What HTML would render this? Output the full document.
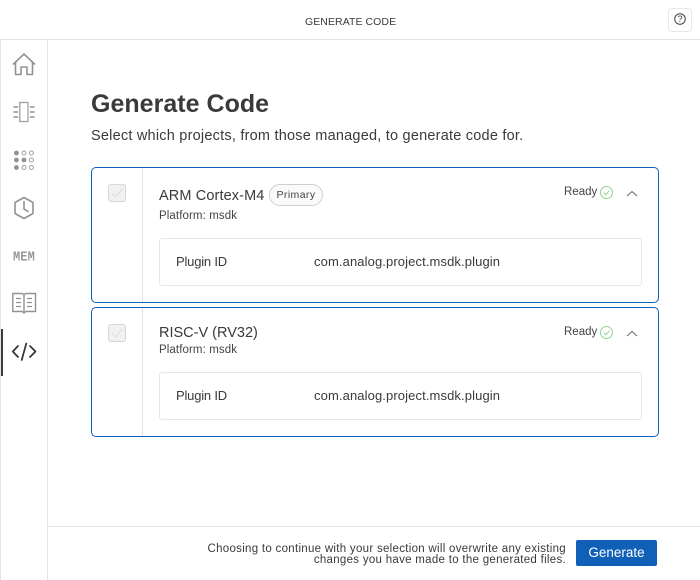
<!DOCTYPE html>
<html><head><meta charset="utf-8"><style>
html,body{margin:0;padding:0;background:#fff}
body{width:700px;height:580px;position:relative;overflow:hidden;font-family:"Liberation Sans",sans-serif;color:#333}
.a{position:absolute;white-space:nowrap}
.card{position:absolute;left:91px;width:566px;border:1px solid #1160b8;border-radius:5px}
.vd{position:absolute;left:50px;top:0;bottom:0;width:1px;background:#e2e2e2}
.cb{position:absolute;left:108px;width:16px;height:16px;border:1px solid #d6d6d6;border-radius:3px;background:#f1f1f1}
.inner{position:absolute;left:159px;width:481px;height:46px;border:1px solid #e6e6e6;border-radius:3px}
.t{font-size:14.5px;color:#3a3a3a}
.s{font-size:11.5px;letter-spacing:.1px;color:#444}
.p{font-size:13px;letter-spacing:-.2px;color:#3a3a3a}
.v{font-size:13px;letter-spacing:.11px;color:#3a3a3a}
svg{position:absolute;overflow:visible;fill:none}
</style></head><body>
<div class="a" style="left:0;top:39px;width:700px;height:1px;background:#e4e4e4"></div>
<div class="a" style="left:305px;top:16px;font-size:10.5px;letter-spacing:.07px;color:#3a3a3a">GENERATE CODE</div>
<div class="a" style="left:668px;top:8px;width:22px;height:22px;border:1px solid #e8e8e8;border-radius:4px"></div>
<svg style="left:668px;top:8px" width="24" height="24"><circle cx="12" cy="11" r="5.3" stroke="#444" stroke-width="1"/></svg>
<div class="a" style="left:676px;top:14px;width:8px;text-align:center;font-size:9px;color:#444">?</div>

<div class="a" style="left:0;top:40px;width:1px;height:540px;background:#e4e4e8"></div>
<div class="a" style="left:47px;top:40px;width:1px;height:540px;background:#e4e4e4"></div>
<div class="a" style="left:1px;top:329px;width:2px;height:47px;background:#3a3a3a"></div>

<svg style="left:0;top:40px" width="48" height="340" stroke="#929292" stroke-width="1.6">
<path d="M13.5 24 L24 14 L34.5 24 M15.5 22.5 V34.5 H21 V27 H27 V34.5 H32.5 V22.5" stroke-linejoin="round" stroke-linecap="round"/>
<rect x="19.8" y="62.5" width="8.2" height="19" stroke-width="1.3" stroke="#a0a0a0"/>
<path d="M13.5 67 H18 M13.5 72 H18 M13.5 77 H18 M30 67 H34.5 M30 72 H34.5 M30 77 H34.5" stroke-width="1.4"/>
<g fill="#929292" stroke="none"><circle cx="16.4" cy="113" r="2.4"/><circle cx="16.4" cy="120" r="2.4"/><circle cx="24" cy="120" r="2.4"/><circle cx="16.4" cy="127.5" r="2.4"/></g>
<g stroke-width="1" stroke="#a0a0a0"><circle cx="24" cy="113" r="2"/><circle cx="31.4" cy="113" r="2"/><circle cx="31.4" cy="120" r="2"/><circle cx="24" cy="127.5" r="2"/><circle cx="31.4" cy="127.5" r="2"/></g>
<path d="M24 157.5 L33 162.5 V173.5 L24 178.5 L15 173.5 V162.5 Z" stroke-linejoin="round"/>
<path d="M24 161.5 V169 L28 171.5" stroke-linecap="round"/>
<path d="M12.8 253.5 H22.5 L24 255 L25.5 253.5 H35.5 V271.5 H25.5 L24 273 L22.5 271.5 H12.8 Z M24 255 V271.5" stroke-width="1.4" stroke-linejoin="round"/>
<path d="M16 258.5 H21 M16 262.5 H21 M16 266.5 H21 M27 258.5 H32 M27 262.5 H32 M27 266.5 H32" stroke-width="1.2"/>
<g stroke="#333" stroke-width="1.7" stroke-linecap="round" stroke-linejoin="round"><path d="M18 306 L12.8 311.5 L18 317"/><path d="M30 306 L35.5 311.5 L30 317"/><path d="M26.3 303.5 L21.7 320"/></g>
</svg>
<div class="a" style="left:13px;top:250px;font-family:'Liberation Mono',monospace;font-weight:bold;font-size:12px;letter-spacing:.1px;color:#979797;transform:scaleY(1.15)">MEM</div>

<div class="a" style="left:91px;top:90px;font-size:25px;font-weight:bold;letter-spacing:.02px;color:#3a3a3a">Generate Code</div>
<div class="a" style="left:91px;top:128px;font-size:14.5px;letter-spacing:.22px;color:#3a3a3a">Select which projects, from those managed, to generate code for.</div>

<div class="card" style="top:167px;height:134px"><div class="vd"></div></div>
<div class="cb" style="top:184px"></div>
<svg style="left:108px;top:184px" width="18" height="18" stroke="#dcdcdc" stroke-width="1"><path d="M4 9.5 L7.5 13 L14 5"/></svg>
<div class="a t" style="left:159px;top:188px;letter-spacing:.12px">ARM Cortex-M4</div>
<div class="a" style="left:269px;top:184px;width:52px;height:20px;border:1px solid #cfcfcf;border-radius:11px;background:#fafafa;text-align:center;font-size:10.5px;line-height:20px;letter-spacing:.4px;color:#444">Primary</div>
<div class="a s" style="left:159px;top:210px">Platform: msdk</div>
<div class="a s" style="left:564px;top:186px;letter-spacing:0">Ready</div>
<svg style="left:600px;top:186px" width="13" height="13" stroke="#8fd48f" stroke-width="1"><circle cx="6.5" cy="6.5" r="6"/><path d="M3.7 6.7 L5.8 8.8 L9.5 4.6"/></svg>
<svg style="left:626px;top:190px" width="12" height="8" stroke="#666" stroke-width="1"><path d="M1 6 L6 1.5 L11 6"/></svg>
<div class="inner" style="top:238px"></div>
<div class="a p" style="left:176px;top:254px">Plugin ID</div>
<div class="a v" style="left:314px;top:254px">com.analog.project.msdk.plugin</div>

<div class="card" style="top:307px;height:128px"><div class="vd"></div></div>
<div class="cb" style="top:324px"></div>
<svg style="left:108px;top:324px" width="18" height="18" stroke="#dcdcdc" stroke-width="1"><path d="M4 9.5 L7.5 13 L14 5"/></svg>
<div class="a t" style="left:159px;top:325px">RISC-V (RV32)</div>
<div class="a s" style="left:159px;top:344px">Platform: msdk</div>
<div class="a s" style="left:564px;top:326px;letter-spacing:0">Ready</div>
<svg style="left:600px;top:326px" width="13" height="13" stroke="#8fd48f" stroke-width="1"><circle cx="6.5" cy="6.5" r="6"/><path d="M3.7 6.7 L5.8 8.8 L9.5 4.6"/></svg>
<svg style="left:626px;top:330px" width="12" height="8" stroke="#666" stroke-width="1"><path d="M1 6 L6 1.5 L11 6"/></svg>
<div class="inner" style="top:372px"></div>
<div class="a p" style="left:176px;top:388px">Plugin ID</div>
<div class="a v" style="left:314px;top:388px">com.analog.project.msdk.plugin</div>

<div class="a" style="left:48px;top:526px;width:652px;height:1px;background:#e4e4e4"></div>
<div class="a" style="right:134px;top:544px;text-align:right;font-size:11.5px;line-height:11px;letter-spacing:.29px;color:#3a3a3a">Choosing to continue with your selection will overwrite any existing<br>changes you have made to the generated files.</div>
<div class="a" style="left:576px;top:540px;width:81px;height:26px;background:#1160b8;border-radius:2px;color:#fff;font-size:13.5px;line-height:26px;text-align:center">Generate</div>
</body></html>
